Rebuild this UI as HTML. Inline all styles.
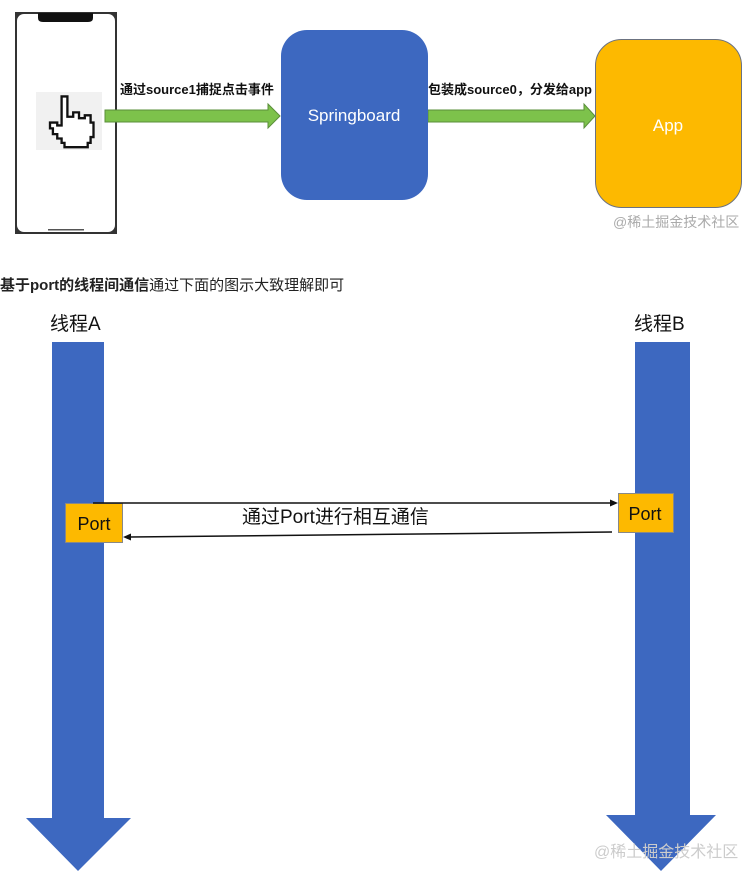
<!DOCTYPE html>
<html><head><meta charset="utf-8"><style>
body{margin:0;width:756px;height:872px;background:#fff;position:relative;overflow:hidden;font-family:"Liberation Sans","Noto Sans CJK SC",sans-serif}
.a{position:absolute}
</style></head><body>
<svg class="a" style="left:0;top:0" width="756" height="872">
<!-- phone -->
<rect x="15" y="12" width="102" height="222" fill="#333"/>
<rect x="17" y="14" width="98" height="218" rx="7" fill="#fff"/>
<path d="M38 13 H93 V18 Q93 22 88 22 H43 Q38 22 38 18 Z" fill="#111"/>
<rect x="48" y="229" width="36" height="1.5" fill="#555"/>
<rect x="36" y="92" width="66" height="58" fill="#f1f1f1"/>
<g transform="translate(50,95) scale(1.45)">
<path d="M8 1 h4 v14 h4 v-3 h4 v4 h4 v-2 h4 v5 h2 v10 h-2 v4 h-2 v3 h-16 v-3 h-2 v-3 h-3 v-3 h-3 v-4 h-2 v-4 h5 v2 h3 v-20 z" fill="#fff" stroke="#111" stroke-width="1.6"/>
</g>
<!-- arrows -->
<path d="M105 110 H268 V104 L280 116 L268 128 V122 H105 Z" fill="#7dc24b" stroke="#5a8f3a" stroke-width="1"/>
<path d="M428 110 H584 V104 L595 116 L584 128 V122 H428 Z" fill="#7dc24b" stroke="#5a8f3a" stroke-width="1"/>
<rect x="281" y="30" width="147" height="170" rx="26" fill="#3d68c0"/>
<rect x="595.5" y="39.5" width="146" height="168" rx="26" fill="#fdb900" stroke="#6b7280" stroke-width="1"/>
<text x="354" y="121" fill="#fff" font-size="17" text-anchor="middle">Springboard</text>
<text x="668" y="131" fill="#fff" font-size="17" text-anchor="middle">App</text>
<text x="120" y="94" font-size="13" font-weight="bold" fill="#111">通过source1捕捉点击事件</text>
<text x="428" y="94" font-size="13" font-weight="bold" fill="#111">包装成source0，分发给app</text>
<text x="613" y="227" font-size="14" fill="#aaa">@稀土掘金技术社区</text>
<text x="0" y="290" font-size="15" fill="#222"><tspan font-weight="bold">基于port的线程间通信</tspan>通过下面的图示大致理解即可</text>
<!-- threads -->
<text x="50" y="330" font-size="19" fill="#111">线程A</text>
<text x="634" y="330" font-size="19" fill="#111">线程B</text>
<path d="M52 342 H104 V818 H131 L78 871 L26 818 H52 Z" fill="#3d68c0"/>
<path d="M635 342 H690 V815 H716 L661 871 L606 815 H635 Z" fill="#3d68c0"/>
<rect x="65.5" y="503.5" width="57" height="39" fill="#fdb900" stroke="#888"/>
<rect x="618.5" y="493.5" width="55" height="39" fill="#fdb900" stroke="#888"/>
<text x="94" y="530" font-size="18" text-anchor="middle" fill="#111">Port</text>
<text x="645" y="520" font-size="18" text-anchor="middle" fill="#111">Port</text>
<line x1="93" y1="503" x2="612" y2="503" stroke="#111" stroke-width="1.5"/>
<path d="M618 503 L610 499.5 V506.5 Z" fill="#111"/>
<line x1="130" y1="537" x2="612" y2="532" stroke="#111" stroke-width="1.5"/>
<path d="M123 537 L131 533.5 V540.5 Z" fill="#111"/>
<text x="242" y="523" font-size="19" fill="#111">通过Port进行相互通信</text>
<text x="594" y="857" font-size="16" fill="#ccc">@稀土掘金技术社区</text>
</svg>
</body></html>
